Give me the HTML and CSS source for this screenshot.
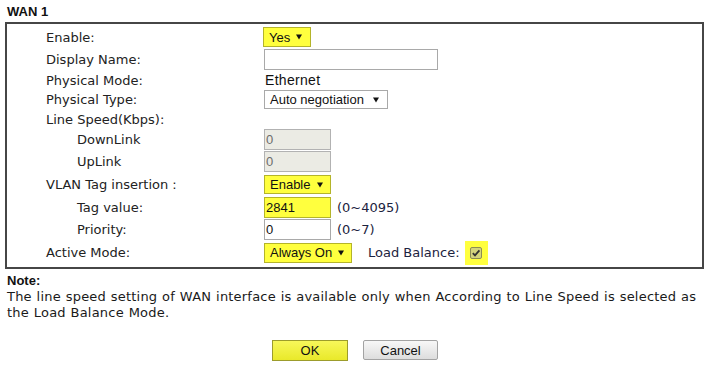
FILE: index.html
```html
<!DOCTYPE html>
<html>
<head>
<meta charset="utf-8">
<link rel="stylesheet" href="styles.css">
</head>
<body>
<div class="page">
  <div class="title">WAN 1</div>
  <div class="box">
    <div class="row r22">
      <div class="lbl">Enable:</div>
      <div class="val"><span class="sel hl s-yes">Yes<svg class="arr" viewBox="0 0 7 6"><polygon points="0,0 7,0 3.5,6"/></svg></span></div>
    </div>
    <div class="row r22">
      <div class="lbl">Display Name:</div>
      <div class="val"><span class="inp w-name"></span></div>
    </div>
    <div class="row r20">
      <div class="lbl">Physical Mode:</div>
      <div class="val"><span class="plain">Ethernet</span></div>
    </div>
    <div class="row r19">
      <div class="lbl">Physical Type:</div>
      <div class="val"><span class="sel s-auto">Auto negotiation<svg class="arr" viewBox="0 0 7 6"><polygon points="0,0 7,0 3.5,6"/></svg></span></div>
    </div>
    <div class="row r20">
      <div class="lbl">Line Speed(Kbps):</div>
      <div class="val"></div>
    </div>
    <div class="row r21">
      <div class="lbl sub">DownLink</div>
      <div class="val"><span class="inp dis">0</span></div>
    </div>
    <div class="row r23">
      <div class="lbl sub">UpLink</div>
      <div class="val"><span class="inp dis">0</span></div>
    </div>
    <div class="row r23">
      <div class="lbl">VLAN Tag insertion :</div>
      <div class="val"><span class="sel hl s-enable">Enable<svg class="arr" viewBox="0 0 7 6"><polygon points="0,0 7,0 3.5,6"/></svg></span></div>
    </div>
    <div class="row r22">
      <div class="lbl sub">Tag value:</div>
      <div class="val"><span class="inp hl">2841</span><span class="hint">(0~4095)</span></div>
    </div>
    <div class="row r23">
      <div class="lbl sub">Priority:</div>
      <div class="val"><span class="inp">0</span><span class="hint">(0~7)</span></div>
    </div>
    <div class="row r23">
      <div class="lbl">Active Mode:</div>
      <div class="val">
        <span class="sel hl s-always">Always On<svg class="arr" viewBox="0 0 7 6"><polygon points="0,0 7,0 3.5,6"/></svg></span>
        <span class="lb">Load Balance:</span>
        <span class="chk-hl"><span class="chk"><svg viewBox="0 0 10 10"><path d="M1.8 5.2 L4 7.4 L8.4 2.4" /></svg></span></span>
      </div>
    </div>
  </div>
  <div class="note-title">Note:</div>
  <div class="note">The line speed setting of WAN interface is available only when According to Line Speed is selected as the Load Balance Mode.</div>
  <div class="buttons">
    <span class="btn ok">OK</span>
    <span class="btn cancel">Cancel</span>
  </div>
</div>
</body>
</html>
```

FILE: styles.css
```css
html, body {
  margin: 0;
  padding: 0;
  background: #fff;
}
body {
  font-family: "DejaVu Sans", Verdana, sans-serif;
  font-size: 13px;
  color: #222;
}
.page {
  padding: 4px 6px 0 5px;
}
.title {
  font: bold 13px/16px "Liberation Sans", Arial, sans-serif;
  color: #111;
  padding-left: 2px;
  margin-bottom: 2px;
}
.box {
  border: 2px solid #464646;
  padding: 2px 0 3px;
}
.row {
  display: flex;
  align-items: center;
}
.r19 { height: 19px; }
.r20 { height: 20px; }
.r21 { height: 21px; }
.r22 { height: 22px; }
.r23 { height: 23px; }
.lbl {
  flex: none;
  width: 257px;
  box-sizing: border-box;
  padding-left: 39px;
  white-space: nowrap;
}
.lbl.sub {
  padding-left: 70px;
}
.val {
  display: flex;
  align-items: center;
  font-family: "Liberation Sans", Arial, sans-serif;
  font-size: 13px;
  color: #111;
}
.plain {
  font-size: 14px;
  letter-spacing: 0.3px;
  padding-left: 1px;
}
.sel {
  display: inline-flex;
  align-items: center;
  justify-content: space-between;
  box-sizing: border-box;
  border: 1px solid #a9a9a9;
  background: #fff;
  padding: 0 7px 0 5px;
  color: #111;
}
.sel .arr {
  width: 6px;
  height: 6px;
  fill: #111;
  flex: none;
}
.s-yes { width: 48px; height: 20px; margin-left: -1px; padding-right: 8px; }
.s-auto { width: 124px; height: 19px; padding-right: 8px; }
.s-enable { width: 67px; height: 19px; }
.s-always { width: 88px; height: 20px; }
.hl {
  background: #ffff3e;
  border-color: #b4b42a;
}
.inp {
  display: inline-flex;
  align-items: center;
  box-sizing: border-box;
  width: 67px;
  height: 21px;
  border: 1px solid #a9a9a9;
  background: #fff;
  padding-left: 1px;
}
.inp.w-name {
  width: 174px;
}
.inp.dis {
  background: #ebebe4;
  color: #6d6d6d;
  border-color: #b2b2b2;
}
.inp.hl {
  background: #ffff3e;
  border-color: #b4b42a;
}
.hint {
  font-family: "DejaVu Sans", Verdana, sans-serif;
  color: #1c2340;
  margin-left: 6px;
}
.lb {
  font-family: "DejaVu Sans", Verdana, sans-serif;
  color: #1c2340;
  margin-left: 16px;
}
.chk-hl {
  display: inline-flex;
  align-items: center;
  justify-content: center;
  width: 23px;
  height: 24px;
  margin-left: 5px;
  background: #ffff3e;
}
.chk {
  display: inline-flex;
  box-sizing: border-box;
  width: 12px;
  height: 12px;
  border: 1px solid #8c8c55;
  border-radius: 2px;
  background: #d4d47c;
}
.chk svg {
  width: 10px;
  height: 10px;
  fill: none;
  stroke: #333;
  stroke-width: 1.8;
}
.note-title {
  font: bold 13px/16px "Liberation Sans", Arial, sans-serif;
  color: #111;
  margin-top: 4px;
  padding-left: 2px;
}
.note {
  line-height: 16px;
  padding-left: 2px;
  color: #1a1a1a;
  letter-spacing: 0.2px;
  word-spacing: 0.5px;
}
.buttons {
  display: flex;
  justify-content: center;
  align-items: flex-start;
  gap: 15px;
  margin-top: 19px;
  padding-left: 1px;
}
.btn {
  display: inline-flex;
  align-items: center;
  justify-content: center;
  box-sizing: border-box;
  font-family: "Liberation Sans", Arial, sans-serif;
  font-size: 13px;
  color: #111;
}
.ok {
  width: 76px;
  height: 21px;
  border: 1px solid #9c9c2c;
  background: linear-gradient(#f7f75a, #e9e92a);
  box-shadow: 0 2px 0 #ffff3e;
}
.cancel {
  width: 75px;
  height: 20px;
  border: 1px solid #a3a3a3;
  border-radius: 2px;
  background: linear-gradient(#f8f8f8, #dddddd);
}
```
